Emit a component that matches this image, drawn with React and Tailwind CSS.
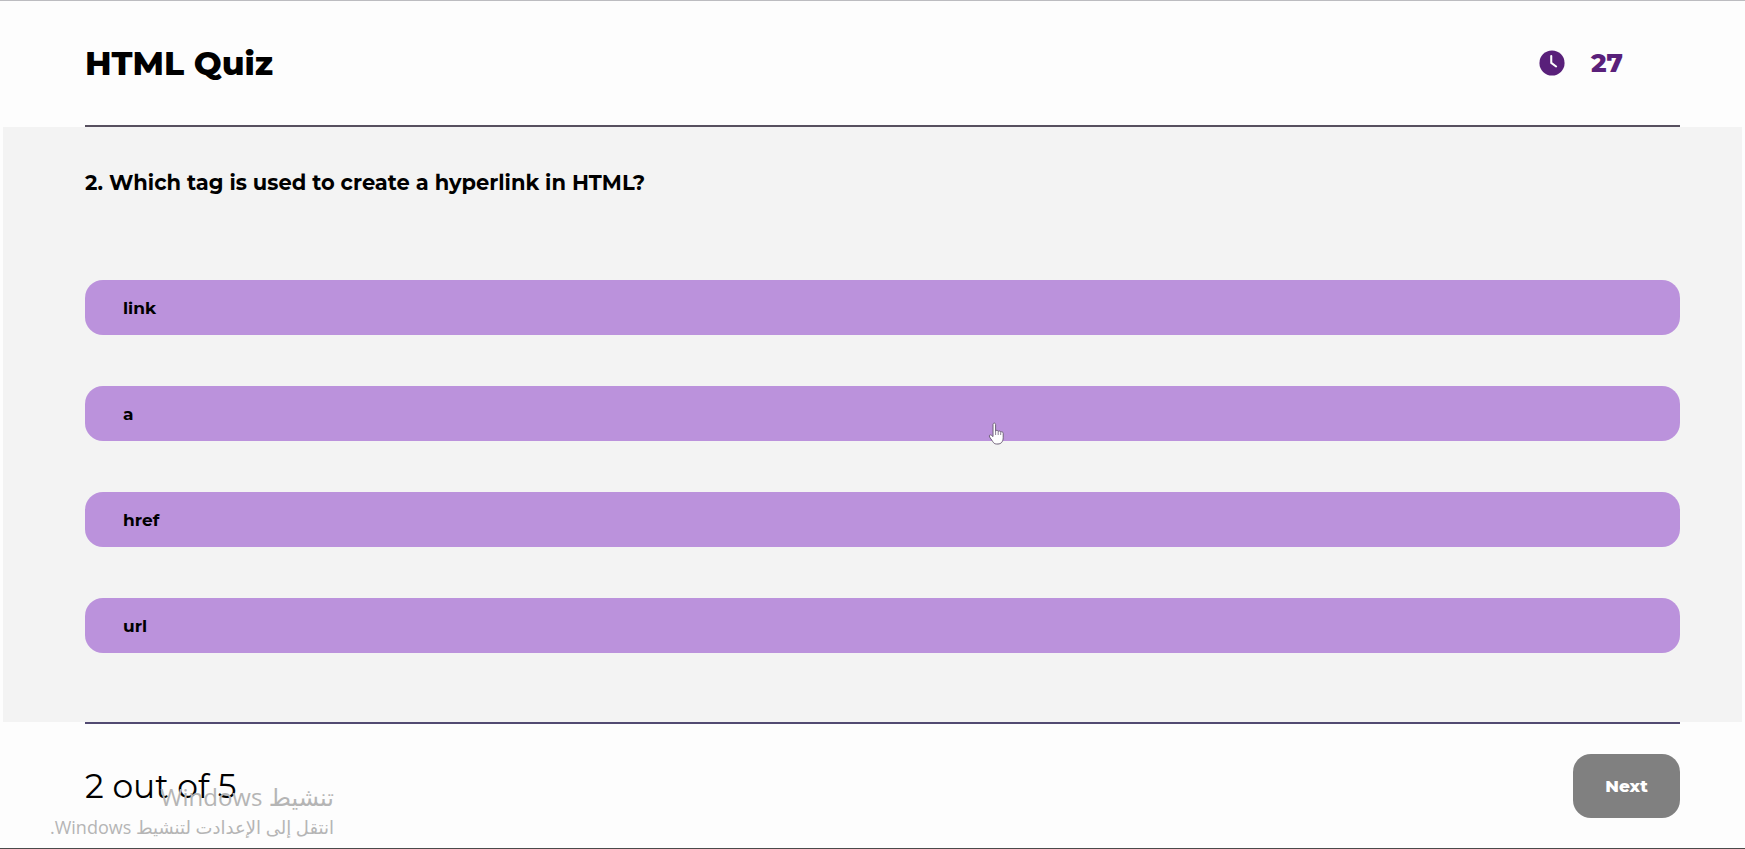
import React, { useState } from "react";

const OPTIONS = ["link", "a", "href", "url"];

function ClockIcon() {
  return (
    <svg viewBox="0 0 24 24" className="size-[26px]" aria-hidden="true">
      <circle cx="12" cy="12" r="11.6" fill="#59207a" />
      <path d="M11.3 5.6v6.3l4.5 3.3" fill="none" stroke="#fdfdfd" strokeWidth="1.9" strokeLinecap="round" strokeLinejoin="round" />
    </svg>
  );
}

function HandPointer() {
  return (
    <svg viewBox="0 0 18 24" className="pointer-events-none absolute top-[36px] left-[56.6%] h-[24px] w-[18px]" aria-hidden="true">
      <path
        d="M5 2.6c0-2 2.6-2 2.6 0V9c.5-1 2.4-.8 2.6.4.7-.8 2.3-.5 2.5.7.8-.7 2.5-.3 2.5 1.3v4.4c0 3.6-2 6.2-5.2 6.2H8.6c-2 0-3-1-4-2.6L1.6 15c-1-1.6.6-2.8 1.9-1.7L5 14.6z"
        fill="#fff"
        stroke="#6d6078"
        strokeWidth="1"
      />
      <path d="M7.6 9v4M10.2 9.6V13M12.7 10.3V13" stroke="#6d6078" strokeWidth=".8" />
    </svg>
  );
}

export default function App() {
  const [answer, setAnswer] = useState(null);

  return (
    <main className="relative border-t border-b border-t-[#bcbcc0] border-b-[#4a4a4a] bg-[#fdfdfd] font-['Montserrat','Inter',sans-serif] text-black">
      <header className="pr-[65px] pl-[85px]">
        <div className="flex h-[126px] items-center justify-between border-b-2 border-[#57505f] pr-[57px]">
          <h1 className="text-[33px] leading-[40px] font-extrabold">HTML Quiz</h1>
          <div className="flex items-center gap-[26px] text-[#59207a]">
            <ClockIcon />
            <span className="text-[26px] leading-[32px] font-extrabold">27</span>
          </div>
        </div>
      </header>

      <section className="mx-[3px] bg-[#f3f3f3] pr-[62px] pl-[82px]">
        <h2 className="pt-[40px] text-[21px] leading-[32px] font-bold">
          2. Which tag is used to create a hyperlink in HTML?
        </h2>
        <div className="flex flex-col gap-[51px] pt-[81px] pb-[69px]">
          {OPTIONS.map((option) => (
            <button
              key={option}
              type="button"
              aria-pressed={answer === option}
              onClick={() => setAnswer(option)}
              className="relative flex h-[55px] w-full cursor-pointer items-center rounded-[18px] bg-[#bb92dc] pl-[38px] text-left text-[17px] leading-[24px] font-bold"
            >
              {option}
              {option === "a" && <HandPointer />}
            </button>
          ))}
        </div>
      </section>

      <footer className="pr-[65px] pl-[85px]">
        <div className="flex h-[126px] items-center justify-between border-t-2 border-[#524a72]">
          <p className="text-[33px] leading-[40px] font-normal">2 out of 5</p>
          <button type="button" className="h-[64px] w-[107px] cursor-pointer rounded-[18px] bg-[#808080] text-[17px] leading-[24px] font-extrabold text-white">
            Next
          </button>
        </div>
      </footer>

      <aside dir="rtl" lang="ar" className="pointer-events-none absolute bottom-[7px] left-[50px] w-[284px] font-['Segoe_UI','Open_Sans','DejaVu_Sans',sans-serif] whitespace-nowrap text-[#b5b5b5]">
        <p className="text-[24px] leading-[32px]">تنشيط Windows</p>
        <p className="text-[18px] leading-[28px]">انتقل إلى الإعدادت لتنشيط Windows.</p>
      </aside>
    </main>
  );
}
